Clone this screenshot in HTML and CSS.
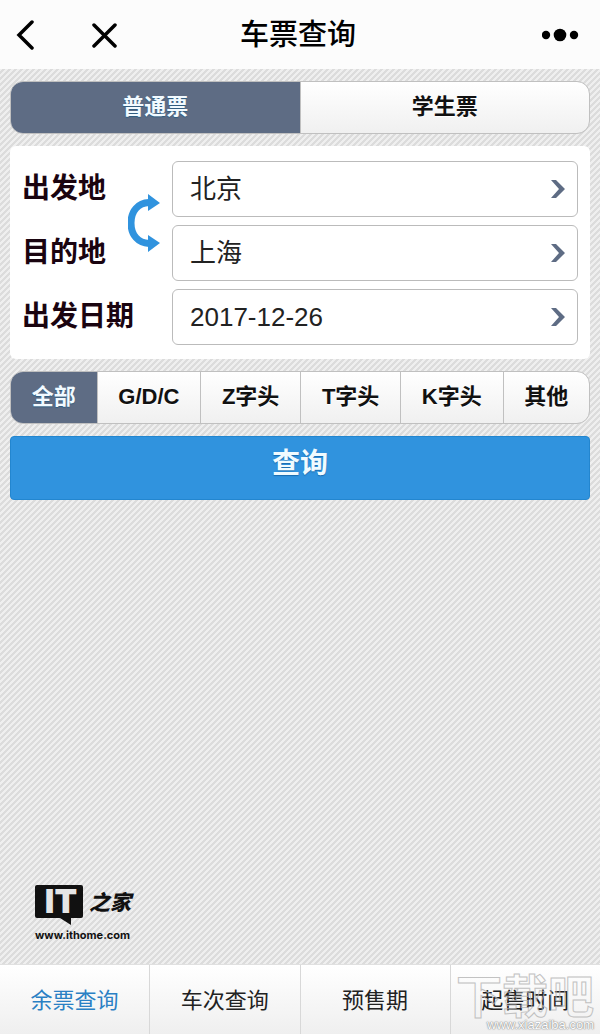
FILE: index.html
```html
<!DOCTYPE html>
<html lang="zh-CN">

<head>
  <meta charset="UTF-8" />
  <meta name="viewport" content="width=device-width, initial-scale=1.0" />
  <title>车票查询</title>
  <link rel="stylesheet" href="styles.css">
</head>

<body>
  <header class="topbar">
    <div class="topbar-left">
      <button class="icon-btn" type="button" aria-label="返回">
        <svg width="18" height="30" viewBox="0 0 18 30"><path d="M16 2 L3 15 L16 28" /></svg>
      </button>
      <button class="icon-btn" type="button" aria-label="关闭">
        <svg width="26" height="26" viewBox="0 0 26 26"><path d="M3 3 L24 24 M24 3 L3 24" /></svg>
      </button>
    </div>
    <h1 class="title">车票查询</h1>
    <button class="icon-btn more" type="button" aria-label="更多">
      <svg class="dots" width="38" height="14" viewBox="0 0 38 14">
        <circle cx="4" cy="7" r="4.200" />
        <circle cx="18" cy="7" r="6.300" />
        <circle cx="32" cy="7" r="4.200" />
      </svg>
    </button>
  </header>

  <main class="content">
    <div class="segment tickets">
      <button class="active" type="button">普通票</button>
      <button type="button">学生票</button>
    </div>

    <form class="card">
      <div class="row">
        <label for="from">出发地</label>
        <div class="field">
          <input type="text" id="from" value="北京" readonly />
          <svg width="14" height="18" viewBox="0 0 14 18"><path d="M0 0 H5 L14 9 L5 18 H0 L8 9 Z" /></svg>
        </div>
      </div>

      <div class="row">
        <label for="to">目的地</label>
        <div class="field">
          <input type="text" id="to" value="上海" readonly />
          <svg width="14" height="18" viewBox="0 0 14 18"><path d="M0 0 H5 L14 9 L5 18 H0 L8 9 Z" /></svg>
        </div>
      </div>

      <div class="row">
        <label for="date">出发日期</label>
        <div class="field">
          <input type="text" id="date" value="2017-12-26" readonly />
          <svg width="14" height="18" viewBox="0 0 14 18"><path d="M0 0 H5 L14 9 L5 18 H0 L8 9 Z" /></svg>
        </div>
      </div>

      <button class="swap" type="button" aria-label="交换">
        <svg width="32" height="58" viewBox="0 0 32 58">
          <path class="arc" d="M21 8.500 C10 9 3 17 3 29 C3 41 10 49 21 49.500" />
          <path class="tip" d="M20 0 L32 9 L20 17 Z M20 41 L32 49 L20 58 Z" />
        </svg>
      </button>
    </form>

    <div class="segment trains">
      <button class="active" type="button">全部</button>
      <button type="button">G/D/C</button>
      <button type="button">Z字头</button>
      <button type="button">T字头</button>
      <button type="button">K字头</button>
      <button type="button">其他</button>
    </div>

    <button class="search" type="button">查询</button>

    <div class="brand">
      <div class="brand-row">
        <span class="brand-it">IT</span>
        <span class="brand-home">之家</span>
      </div>
      <div class="brand-url">www.ithome.com</div>
    </div>
  </main>

  <nav class="tabbar">
    <a class="current" href="#">余票查询</a>
    <a href="#">车次查询</a>
    <a href="#">预售期</a>
    <a href="#">起售时间</a>
    <div class="watermark">
      <span class="watermark-name">下载吧</span>
      <span class="watermark-url">www.xiazaiba.com</span>
    </div>
  </nav>
</body>

</html>
```

FILE: styles.css
```css
* {
  box-sizing: border-box;
}

body {
  display: flex;
  flex-direction: column;
  margin: 0;
  min-height: 100vh;
  font-family: "Liberation Sans", "Noto Sans CJK SC", sans-serif;
  font-size: 22px;
  color: #222;
  background: linear-gradient(135deg, #dcdcdc 25%, #efefef 25% 50%, #dcdcdc 50% 75%, #efefef 75%);
  background-size: 6px 6px;
}

button,
input {
  font: inherit;
  color: inherit;
}

button {
  padding: 0;
  border: 0;
  background: none;
  cursor: pointer;
}

svg {
  display: block;
}

/* top bar */
.topbar {
  display: grid;
  grid-template-columns: 1fr auto 1fr;
  align-items: center;
  height: 69px;
  padding: 0 20px 0 16px;
  background: #fcfcfc;
}

.topbar-left {
  display: flex;
  align-items: center;
  gap: 57px;
}

.icon-btn path {
  fill: none;
  stroke: #000;
  stroke-width: 3.5;
  stroke-linecap: round;
}

.more {
  justify-self: end;
}

.title {
  margin: 0;
  font-size: 29px;
  font-weight: 500;
  line-height: 30px;
  color: #000;
}

/* page */
.content {
  flex: 1;
  display: flex;
  flex-direction: column;
  gap: 12px;
  padding: 12px 10px 22px;
}

.segment {
  display: flex;
  height: 53px;
  border: 1px solid #c0c0c0;
  border-radius: 13px;
  background: linear-gradient(#fff, #f0f0f0);
  overflow: hidden;
}

.segment button {
  flex: 1 1 auto;
  padding-bottom: 1px;
  font-weight: 700;
  line-height: 24px;
  color: #111;
  text-shadow: 0 1px 0 #fff;
}

.segment button + button {
  border-left: 1px solid #c0c0c0;
}

.segment .active {
  color: #f2faff;
  background: #5e6c84;
  text-shadow: 0 1px 1px #2d5c80;
}

.tickets button {
  flex-basis: 0;
}

.card {
  position: relative;
  display: flex;
  flex-direction: column;
  gap: 8px;
  padding: 15px 12px 14px;
  border-radius: 6px;
  background: #fff;
}

.row {
  display: flex;
  align-items: center;
}

.row label {
  width: 150px;
  font-size: 28px;
  font-weight: 700;
  line-height: 28px;
  color: #1a0410;
}

.field {
  flex: 1;
  display: flex;
  align-items: center;
  height: 56px;
  padding: 0 12px 0 17px;
  border: 1px solid #bbb;
  border-radius: 6px;
}

.field input {
  flex: 1;
  min-width: 0;
  height: 40px;
  padding: 0;
  border: 0;
  outline: 0;
  background: none;
  font-size: 26px;
  line-height: 40px;
}

.field path {
  fill: #5e6c84;
}

/* sits over the first two rows, between labels and fields */
.swap {
  position: absolute;
  top: 48px;
  left: 118px;
}

.swap .arc {
  fill: none;
  stroke: #3093de;
  stroke-width: 7;
}

.swap .tip {
  fill: #3093de;
}

.search {
  height: 64px;
  padding-bottom: 8px;
  border: 1px solid #2386cf;
  border-radius: 4px;
  font-size: 28px;
  font-weight: 700;
  line-height: 28px;
  color: #f0fbff;
  background: #3093de;
  text-shadow: 0 1px 1px #1a6cae;
}

/* brand mark above the tab bar */
.brand {
  margin-top: auto;
  padding-left: 25px;
  color: #111;
}

.brand-row {
  display: flex;
  gap: 6px;
  height: 43px;
}

.brand-it {
  position: relative;
  width: 48px;
  height: 33px;
  padding-left: 4px;
  border-radius: 2px;
  font-family: Inter, sans-serif;
  font-size: 33px;
  font-weight: 900;
  line-height: 33px;
  text-align: center;
  color: #e5e5e5;
  background: #111;
}

.brand-it::after {
  content: "";
  position: absolute;
  top: 100%;
  right: 12px;
  border-top: 7px solid #111;
  border-left: 11px solid transparent;
}

.brand-home {
  font-size: 21px;
  font-weight: 900;
  font-style: italic;
  line-height: 35px;
}

.brand-url {
  font-family: Inter, sans-serif;
  font-size: 11px;
  font-weight: 700;
  line-height: 14px;
}

/* bottom tabs */
.tabbar {
  position: relative;
  display: flex;
  height: 70px;
  border-top: 1px solid #e0e0e0;
  background: linear-gradient(#fff, #efefef);
}

.tabbar a {
  flex: 1;
  border-right: 1px solid #d8d8d8;
  line-height: 72px;
  text-align: center;
  color: #222;
  text-decoration: none;
}

.tabbar a:last-of-type {
  border-right: 0;
}

.tabbar .current {
  color: #2a80c4;
}

.watermark {
  position: absolute;
  right: 6px;
  bottom: 3px;
  display: flex;
  flex-direction: column;
  align-items: flex-end;
  color: #fff;
  opacity: 0.8;
  pointer-events: none;
}

.watermark-name {
  font-size: 46px;
  font-weight: 700;
  line-height: 44px;
  color: transparent;
  -webkit-text-stroke: 1px #b4b4b4;
}

.watermark-url {
  font-size: 13px;
  line-height: 12px;
  text-shadow: 0 0 1px #777, 0 0 1px #777, 0 0 2px #999;
}
```
